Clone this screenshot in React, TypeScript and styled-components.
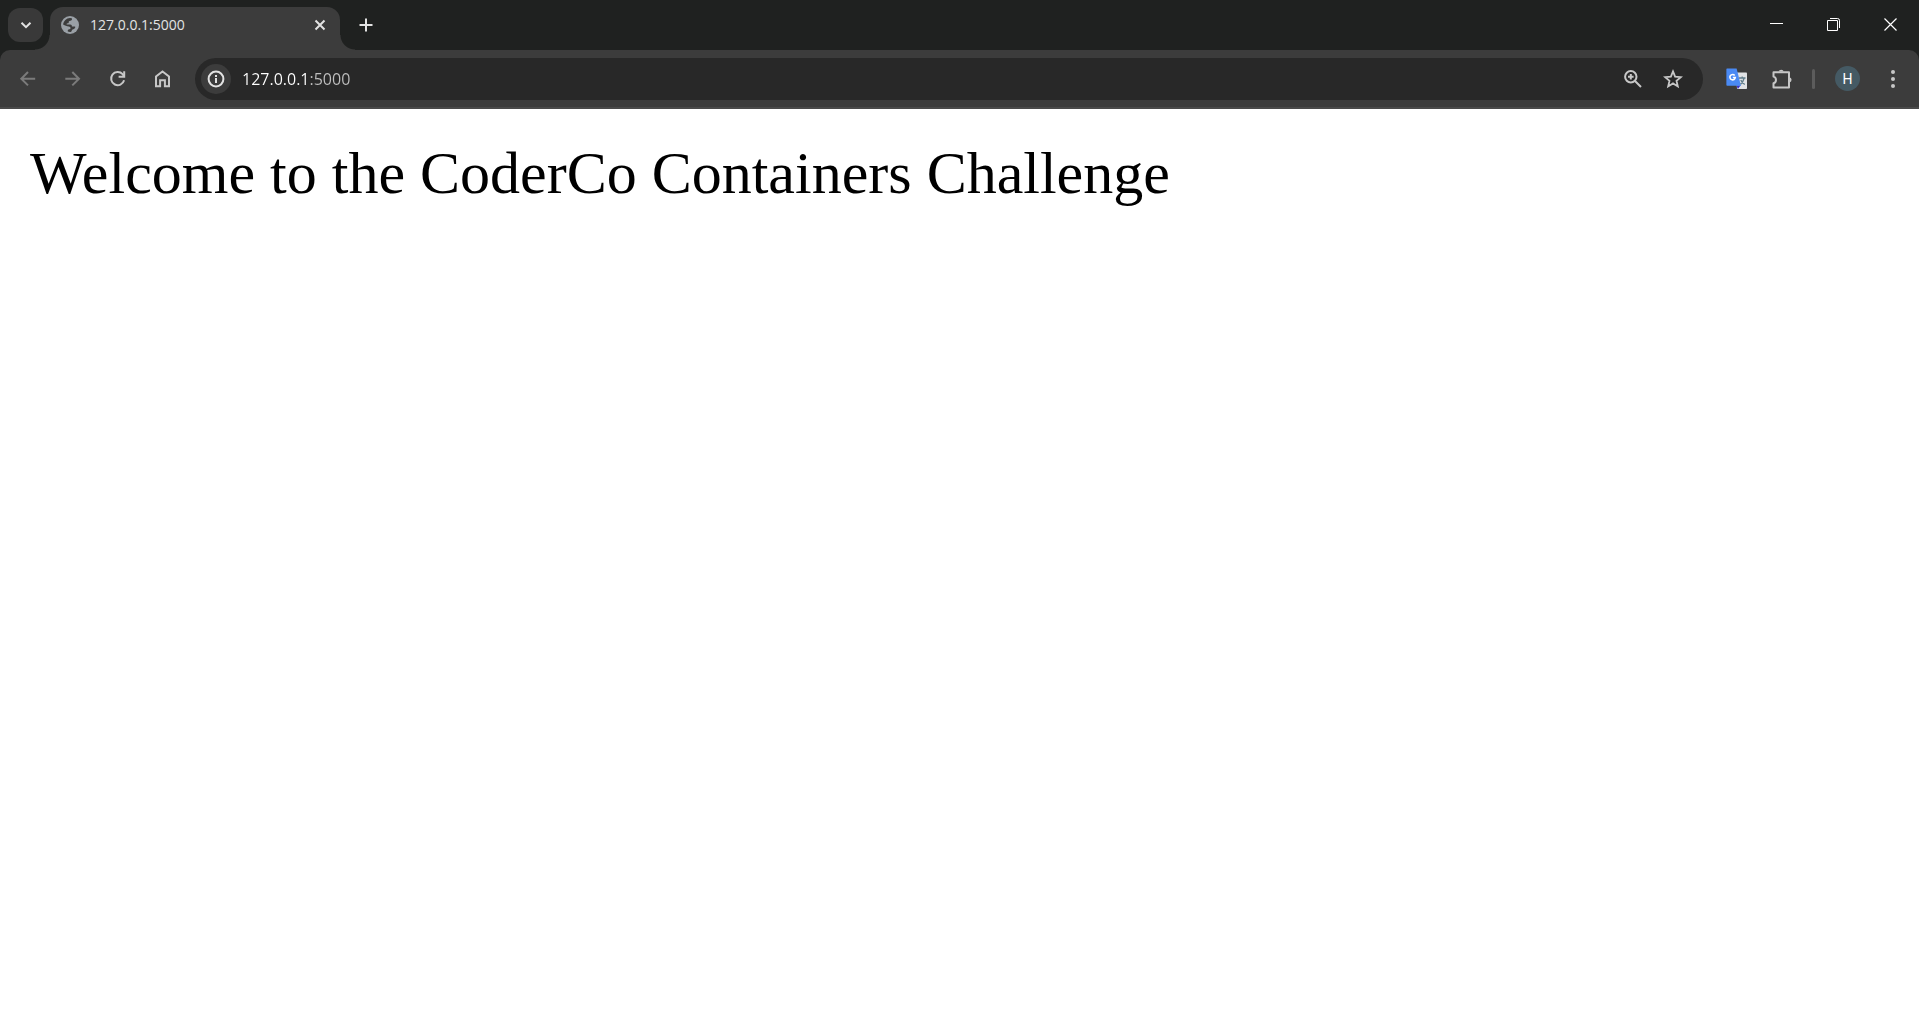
import React from 'react';
import styled, { createGlobalStyle, css } from 'styled-components';

const colors = {
  strip: '#1f2120',
  bar: '#3c3c3c',
  field: '#282828',
  line: '#4a4a4a',
  icon: '#c7c7c7',
  dim: '#7b7b7b',
  text: '#e3e3e3',
};

const GlobalStyle = createGlobalStyle`
  *, *::before, *::after { box-sizing: border-box; }
  body { margin: 0; background: #fff; }
  button { border: 0; padding: 0; background: none; color: inherit; font: inherit; }
  svg { display: block; flex: none; }
`;

const Window = styled.div`
  display: flex;
  flex-direction: column;
  min-height: 100vh;
  font-family: 'Open Sans', 'Noto Sans', sans-serif;
`;

const TabStrip = styled.header`
  display: flex;
  height: 50px;
  padding-left: 8px;
  background: ${colors.strip};
  color: ${colors.text};
`;

const centered = css`
  display: flex;
  align-items: center;
  justify-content: center;
  flex: none;
`;

const TabSearch = styled.button`
  ${centered}
  width: 35px;
  height: 34px;
  margin-top: 8px;
  border-radius: 12px;
  background: #393939;
`;

const Tab = styled.div`
  position: relative;
  display: flex;
  align-items: center;
  width: 290px;
  height: 43px;
  margin: 7px 0 0 7px;
  padding: 0 10px 7px 11px;
  border-radius: 13px 13px 0 0;
  background: ${colors.bar};

  &::before,
  &::after {
    content: '';
    position: absolute;
    bottom: 0;
    width: 15px;
    height: 15px;
  }
  &::before {
    right: 100%;
    background: radial-gradient(circle at 0 0, transparent 14px, ${colors.bar} 15px);
  }
  &::after {
    left: 100%;
    background: radial-gradient(circle at 100% 0, transparent 14px, ${colors.bar} 15px);
  }
`;

const TabTitle = styled.span`
  flex: 1;
  margin-left: 11px;
  font-size: 14px;
  line-height: 20px;
`;

const TabClose = styled.button`
  ${centered}
  width: 20px;
  height: 20px;
`;

const NewTab = styled.button`
  ${centered}
  width: 34px;
  height: 34px;
  margin: 8px 0 0 9px;
`;

const Caption = styled.div`
  display: flex;
  margin-left: auto;
`;

const CaptionButton = styled.button`
  ${centered}
  width: 57px;
  height: 49px;
  color: #fff;
`;

const ToolbarBack = styled.div`
  background: ${colors.strip};
`;

const Toolbar = styled.nav`
  display: flex;
  align-items: center;
  height: 59px;
  padding: 0 4px 0 5px;
  border-bottom: 2px solid ${colors.line};
  border-radius: 10px 10px 0 0;
  background: ${colors.bar};
`;

const ToolButton = styled.button<{ $dim?: boolean }>`
  ${centered}
  width: 45px;
  height: 42px;
  color: ${(p) => (p.$dim ? colors.dim : colors.icon)};
`;

const AddressBar = styled.form`
  display: flex;
  align-items: center;
  flex: 1;
  height: 42px;
  margin: 0 11px 0 10px;
  padding: 0 10px 0 6px;
  border-radius: 21px;
  background: ${colors.field};
`;

const SiteInfo = styled.button`
  ${centered}
  width: 30px;
  height: 30px;
  border-radius: 50%;
  background: ${colors.bar};
  color: ${colors.text};
`;

const Address = styled.input`
  flex: 1;
  min-width: 0;
  height: 30px;
  margin-left: 11px;
  padding: 0;
  border: 0;
  outline: 0;
  background: linear-gradient(90deg, #fff 67px, #c0c0c0 67px);
  background-clip: text;
  -webkit-background-clip: text;
  color: transparent;
  font: 16px/22px 'Open Sans', 'Noto Sans', sans-serif;
`;

const FieldButton = styled.button`
  ${centered}
  width: 40px;
  height: 34px;
  color: ${colors.icon};
`;

const Divider = styled.span`
  width: 3px;
  height: 20px;
  margin: 0 10px 0 8px;
  border-radius: 2px;
  background: #5c5c5c;
`;

const Avatar = styled.span`
  ${centered}
  width: 25px;
  height: 25px;
  border-radius: 50%;
  background: #455a64;
  color: #fff;
  font: 14px/20px Roboto, sans-serif;
`;

const Page = styled.main`
  flex: 1;
  padding: 30px;
  background: #fff;
  color: #000;
  font: 60px/69px 'Liberation Serif', 'Times New Roman', serif;
`;

const Message = styled.p`
  margin: 0;
`;

type IconProps = { size?: number; box?: string; children: React.ReactNode; width?: number };

const Stroke = ({ size = 20, box = '0 0 20 20', width = 2, children }: IconProps) => (
  <svg width={size} height={size} viewBox={box} fill="none" stroke="currentColor" strokeWidth={width} aria-hidden="true">
    {children}
  </svg>
);

const Globe = () => (
  <svg width="18" height="18" viewBox="0 0 18 18" aria-hidden="true">
    <circle cx="9" cy="9" r="9" fill="#9aa0a6" />
    <path
      d="M10.8 2.2C11.4 3.6 10.6 4.6 9.3 4.8C8 5 7.8 5.3 7.8 6.2C7.8 7 7 7.4 6 7.4C5.5 7.5 5.4 8.3 6 8.6H9.2C10.6 8.7 10.9 9.4 10.9 10.6H14C14.6 11 14.2 12.2 13.2 12.8C12 13.4 11.2 13.6 10.8 14.4C10.5 15.3 10 16 9 16C8.3 16 7.4 15.9 6.8 15.6V13.9C7.6 13.4 9.2 13.6 9.5 12.6C9.8 11.2 9 10.6 7.8 10.4C5.8 10.2 4 9.4 2.1 8.4C2.6 4.8 5.6 1.7 9.2 1.9Z"
      fill={colors.bar}
    />
  </svg>
);

const Translate = () => (
  <svg width="22" height="22" viewBox="0 0 22 22" aria-hidden="true">
    <path d="M10 4.5H20.2Q21 4.5 21 5.3V20.2Q21 21 20.2 21H11Z" fill="#e1e3e5" />
    <path d="M10.5 17.3H14.8L11.8 21Z" fill="#3730c8" />
    <path d="M1 .5H10.6L15 17.7H1.2Q.4 17.7 .4 16.9V1.1Q.4 .5 1 .5Z" fill="#4a8af4" />
    <path d="M13 10H19.5M16.2 8.5V10M18.2 10C17.6 12.5 16 14.7 14.6 16.2M14.8 12C15.5 13.9 17 15.5 18.8 16.5" fill="none" stroke="#607d8b" strokeWidth="1.3" />
    <path d="M8.7 7.4A2.7 2.7 0 1 0 9.3 9.5H6.8" fill="none" stroke="#fff" strokeWidth="1.6" />
  </svg>
);

export default function App() {
  return (
    <Window>
      <GlobalStyle />
      <TabStrip>
        <TabSearch aria-label="Search tabs">
          <Stroke size={12} box="0 0 12 12"><path d="M1.5 3.8L6 8.2L10.5 3.8" /></Stroke>
        </TabSearch>
        <Tab>
          <Globe />
          <TabTitle>127.0.0.1:5000</TabTitle>
          <TabClose aria-label="Close tab">
            <Stroke size={12} box="0 0 12 12"><path d="M1.5 1.5L10.5 10.5M10.5 1.5L1.5 10.5" /></Stroke>
          </TabClose>
        </Tab>
        <NewTab aria-label="New tab">
          <Stroke size={14} box="0 0 14 14"><path d="M7 .5V13.5M.5 7H13.5" /></Stroke>
        </NewTab>
        <Caption>
          <CaptionButton aria-label="Minimize">
            <Stroke size={13} box="0 0 13 13" width={1}><path d="M0 5.5H13" /></Stroke>
          </CaptionButton>
          <CaptionButton aria-label="Restore">
            <Stroke size={13} box="0 0 13 13" width={1}>
              <path d="M.5 2.5H10.5V12.5H.5Z" />
              <path d="M3 .5H10.5Q12.5 .5 12.5 2.5V10" />
            </Stroke>
          </CaptionButton>
          <CaptionButton aria-label="Close">
            <Stroke size={13} box="0 0 13 13" width={1.2}><path d="M.5 .5L12.5 12.5M12.5 .5L.5 12.5" /></Stroke>
          </CaptionButton>
        </Caption>
      </TabStrip>
      <ToolbarBack>
        <Toolbar>
          <ToolButton $dim aria-label="Back">
            <Stroke><path d="M17.2 9.7H4M10 3L3.3 9.7L10 16.4" /></Stroke>
          </ToolButton>
          <ToolButton $dim aria-label="Forward">
            <Stroke><path d="M2.3 9.7H16M9.3 3L16 9.7L9.3 16.4" /></Stroke>
          </ToolButton>
          <ToolButton aria-label="Reload">
            <Stroke>
              <path d="M16.1 11.3A6.6 6.6 0 1 1 14.6 5.1L15.8 6.8" />
              <path d="M16.2 2.3V7.8H10.6" />
            </Stroke>
          </ToolButton>
          <ToolButton aria-label="Home">
            <Stroke><path d="M3 17.3V7.4L9.5 2.4L16 7.4V17.3H11.9V11.3H7.1V17.3Z" /></Stroke>
          </ToolButton>
          <AddressBar onSubmit={(e) => e.preventDefault()}>
            <SiteInfo type="button" aria-label="View site information">
              <Stroke size={18} box="0 0 18 18">
                <circle cx="9" cy="9" r="7.4" />
                <path d="M9 8V13M9 5V7" />
              </Stroke>
            </SiteInfo>
            <Address aria-label="Address" defaultValue="127.0.0.1:5000" spellCheck={false} />
            <FieldButton type="button" aria-label="Zoom">
              <Stroke>
                <circle cx="7.8" cy="7.8" r="5.7" />
                <path d="M12 12L18 18M7.8 5V10.6M5 7.8H10.6" />
              </Stroke>
            </FieldButton>
            <FieldButton type="button" aria-label="Bookmark this tab">
              <Stroke width={1.8}>
                <path d="M10 2.4L12.1 7.6L17.8 8.1L13.5 11.8L14.8 17.4L10 14.4L5.2 17.4L6.5 11.8L2.2 8.1L7.9 7.6Z" />
              </Stroke>
            </FieldButton>
          </AddressBar>
          <ToolButton aria-label="Translate"><Translate /></ToolButton>
          <ToolButton aria-label="Extensions">
            <Stroke size={22} box="0 0 22 22">
              <path d="M2.5 4.2H18V19.5H2.5V15.2C5.8 14.4 5.8 9.4 2.5 8.6Z" strokeLinejoin="round" />
              <path d="M7.6 3.6A2.7 2.7 0 0 1 12.8 3.6ZM18.6 9.2A2.7 2.7 0 0 1 18.6 14.4Z" fill="currentColor" stroke="none" />
            </Stroke>
          </ToolButton>
          <Divider />
          <ToolButton aria-label="Profile"><Avatar>H</Avatar></ToolButton>
          <ToolButton aria-label="Menu">
            <svg width="20" height="20" viewBox="0 0 20 20" fill="currentColor" aria-hidden="true">
              <circle cx="10" cy="3" r="2" /><circle cx="10" cy="10" r="2" /><circle cx="10" cy="17" r="2" />
            </svg>
          </ToolButton>
        </Toolbar>
      </ToolbarBack>
      <Page>
        <Message>Welcome to the CoderCo Containers Challenge</Message>
      </Page>
    </Window>
  );
}
